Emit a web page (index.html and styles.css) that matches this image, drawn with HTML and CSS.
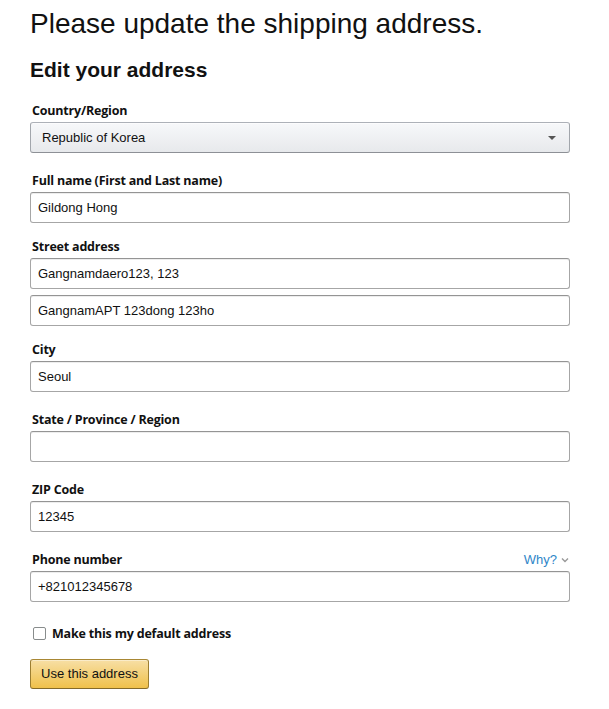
FILE: index.html
```html
<!DOCTYPE html>
<html lang="en">
<head>
<meta charset="utf-8">
<title>Edit address</title>
<link rel="stylesheet" href="styles.css">
</head>
<body>
<div class="page">
  <h1 class="title">Please update the shipping address.</h1>
  <h2 class="subtitle">Edit your address</h2>
  <form class="form">
    <div class="field">
      <label class="label">Country/Region</label>
      <div class="select">
        <span class="select-text">Republic of Korea</span>
        <span class="caret"></span>
      </div>
    </div>
    <div class="field field-tight">
      <label class="label">Full name (First and Last name)</label>
      <div class="input">Gildong Hong</div>
    </div>
    <div class="field field-tight">
      <label class="label">Street address</label>
      <div class="input">Gangnamdaero123, 123</div>
      <div class="input input-second">GangnamAPT 123dong 123ho</div>
    </div>
    <div class="field">
      <label class="label">City</label>
      <div class="input">Seoul</div>
    </div>
    <div class="field">
      <label class="label">State / Province / Region</label>
      <div class="input"></div>
    </div>
    <div class="field">
      <label class="label">ZIP Code</label>
      <div class="input">12345</div>
    </div>
    <div class="field">
      <div class="label-row">
        <label class="label">Phone number</label>
        <span class="why">Why?<svg class="chev" width="8" height="6" viewBox="0 0 8 6"><path d="M1 1.5 L4 4.5 L7 1.5" fill="none" stroke="#999" stroke-width="1.4"/></svg></span>
      </div>
      <div class="input">+821012345678</div>
    </div>
    <div class="check-row">
      <span class="checkbox"></span>
      <span class="check-label">Make this my default address</span>
    </div>
    <div class="button">Use this address</div>
  </form>
</div>
</body>
</html>
```

FILE: styles.css
```css
html, body {
  margin: 0;
  padding: 0;
  background: #fff;
}
body {
  font-family: "Liberation Sans", Arial, sans-serif;
  color: #111;
}
.page {
  width: 540px;
  padding: 7px 30px 0 30px;
}
.title {
  margin: 0;
  font-size: 28px;
  line-height: 34px;
  font-weight: 400;
  color: #111;
}
.subtitle {
  margin: 16px 0 0 0;
  font-size: 21px;
  line-height: 26px;
  font-weight: 700;
  color: #111;
}
.form {
  margin-top: 18px;
  display: flex;
  flex-direction: column;
}
.field {
  display: flex;
  flex-direction: column;
  margin-bottom: 18px;
}
.field-tight {
  margin-bottom: 14px;
}
.label {
  font-family: "Open Sans", "Noto Sans", sans-serif;
  font-weight: 700;
  font-size: 12.5px;
  letter-spacing: -0.2px;
  line-height: 19px;
  padding-left: 2px;
  margin-bottom: 2px;
  color: #111;
}
.label-row {
  display: flex;
  justify-content: space-between;
  align-items: flex-start;
}
.why {
  font-family: "Liberation Sans", Arial, sans-serif;
  font-size: 13px;
  line-height: 19px;
  color: #2f86c8;
  display: flex;
  align-items: center;
  gap: 4px;
  padding-right: 1px;
}
.chev {
  display: block;
}
.select {
  height: 31px;
  box-sizing: border-box;
  border: 1px solid #adb1b8;
  border-color: #adb1b8 #a2a6ac #8d9096;
  border-radius: 3px;
  background: linear-gradient(to bottom, #f7f8fa, #e7e9ec);
  box-shadow: inset 0 1px 0 rgba(255,255,255,.6);
  display: flex;
  align-items: center;
  justify-content: space-between;
  padding: 0 11px 0 11px;
  font-size: 13px;
  color: #111;
}
.caret {
  width: 0;
  height: 0;
  border-left: 4px solid transparent;
  border-right: 4px solid transparent;
  border-top: 4px solid #555;
  margin-right: 2px;
}
.input {
  height: 31px;
  box-sizing: border-box;
  border: 1px solid #a6a6a6;
  border-top-color: #949494;
  border-radius: 3px;
  box-shadow: 0 1px 0 rgba(255,255,255,.5), inset 0 1px 0 rgba(0,0,0,.07);
  padding: 0 7px;
  font-size: 13px;
  line-height: 29px;
  color: #111;
  background: #fff;
}
.input-second {
  margin-top: 6px;
}
.check-row {
  display: flex;
  align-items: center;
  gap: 6px;
  margin-top: 4px;
  height: 19px;
  padding-left: 3px;
}
.checkbox {
  width: 13px;
  height: 13px;
  box-sizing: border-box;
  border: 1px solid #888c8c;
  border-radius: 2px;
  background: #fff;
}
.check-label {
  font-family: "Open Sans", "Noto Sans", sans-serif;
  font-weight: 700;
  font-size: 12.5px;
  letter-spacing: -0.2px;
  line-height: 19px;
  color: #111;
}
.button {
  margin-top: 16px;
  width: 119px;
  height: 30px;
  box-sizing: border-box;
  border: 1px solid #a88734;
  border-color: #a88734 #9c7e31 #846a29;
  border-radius: 3px;
  background: linear-gradient(to bottom, #f7dfa5, #f0c14b);
  box-shadow: inset 0 1px 0 rgba(255,255,255,.4);
  font-size: 13px;
  line-height: 28px;
  text-align: center;
  color: #111;
}
```
